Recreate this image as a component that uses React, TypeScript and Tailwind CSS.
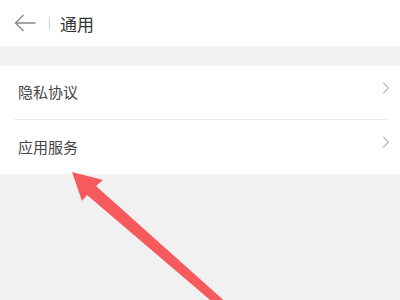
import { ChevronRight } from 'lucide-react'

const rows = ['隐私协议', '应用服务']

export default function App() {
  return (
    <div
      className="relative h-[300px] w-[400px] overflow-hidden bg-[#f1f1f1]"
      style={{ fontFamily: '"Noto Sans CJK SC", "Noto Sans", sans-serif' }}
    >
      <header className="flex h-[46px] items-center bg-white pl-[14px]">
        <svg width="22" height="18" viewBox="0 0 22 18" fill="none" stroke="#8a8a8a" strokeWidth="1.4">
          <path d="M21.5 9H1.5M9.5 1L1.5 9l8 8" />
        </svg>
        <span className="ml-[13px] h-[12px] w-px bg-[#cfcfcf]" />
        <h1 className="ml-[10px] text-[17px] leading-none text-[#333]">通用</h1>
      </header>

      <ul className="mt-[20px] bg-white">
        {rows.map((label, i) => (
          <li key={label} className="pl-[14px] pr-[12px]">
            <div
              className={`flex h-[54px] items-center justify-between ${i === 0 ? 'border-b border-[#ececec]' : ''}`}
            >
              <span className="pl-[4px] text-[15px] text-[#444]">{label}</span>
              <ChevronRight className="-mr-[8px] -mt-[10px] h-[20px] w-[20px] text-[#b8b8b8]" strokeWidth={1.3} />
            </div>
          </li>
        ))}
      </ul>

      {/* red annotation arrow */}
      <svg className="absolute left-0 top-0" width="400" height="300" viewBox="0 0 400 300">
        <polygon points="72,172 103,180 96,186 229,305 216,305 87,195 82,201" fill="#f75a5c" />
      </svg>
    </div>
  )
}
